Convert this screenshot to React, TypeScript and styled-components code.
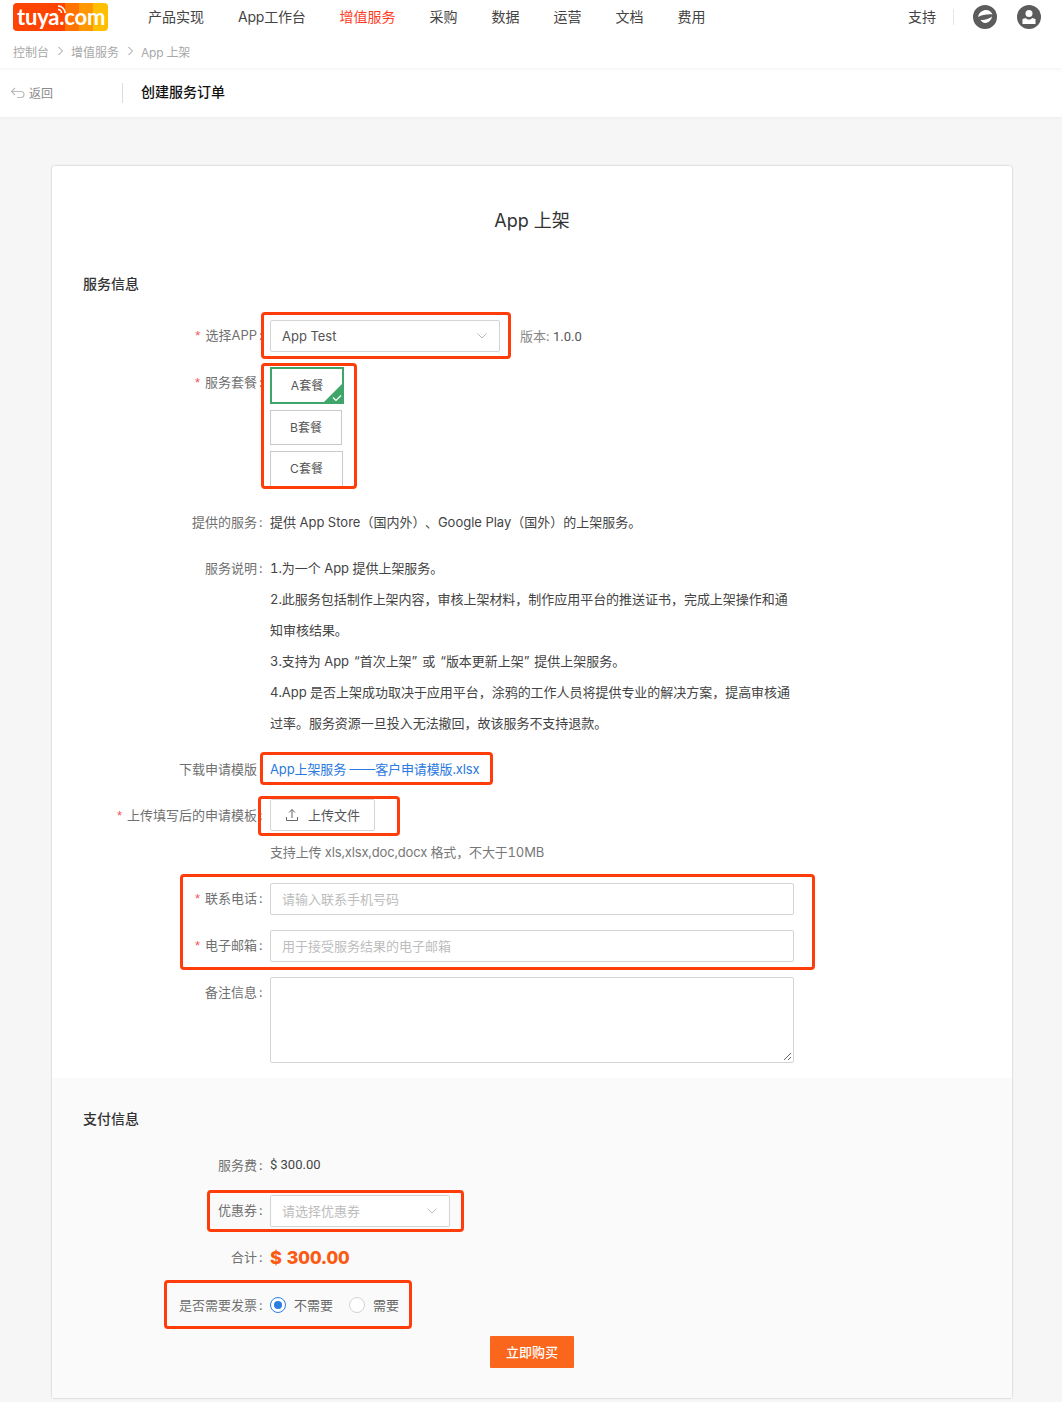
import React from "react";
import styled, { createGlobalStyle } from "styled-components";

const Global = createGlobalStyle`
  html, body { margin: 0; padding: 0; background: #f6f6f6; }
  body { font-family: Inter, "Noto Sans CJK SC", sans-serif; font-size: 13px; color: #444; font-feature-settings: "tnum"; }
  * { box-sizing: border-box; }
`;

const Page = styled.div`
  width: 1062px;
  height: 1402px;
  overflow: hidden;
  position: relative;
`;
const TopBar = styled.header`
  height: 68px;
  background: #fff;
  position: relative;
  z-index: 2;
  box-shadow: 0 1px 4px rgba(0, 0, 0, 0.06);
`;
const NavRow = styled.div`
  height: 37px;
  padding: 0 0 3px 13px;
  display: flex;
  align-items: flex-start;
`;
const Logo = styled.div`
  position: relative;
  flex: none;
  width: 95px;
  height: 28px;
  margin-top: 3px;
  border-radius: 4px;
  overflow: hidden;
  background: linear-gradient(90deg, #ff4300 0 55%, #ff7400 55% 70%, #ff9800 70% 84%, #ffbe00 84% 100%);
  color: #fff;
  font: 700 22px/28px Lato, sans-serif;
  letter-spacing: -0.2px;
  padding-left: 4px;
  white-space: nowrap;
`;
const LogoArcs = styled.svg`
  position: absolute;
  left: 44px;
  top: 1px;
`;
const NavList = styled.nav`
  display: flex;
  margin-left: 40px;
  gap: 34px;
  height: 34px;
  align-items: center;
`;
const NavItem = styled.a<{ $active?: boolean; $tight?: boolean }>`
  font-size: 14px;
  line-height: 20px;
  letter-spacing: ${(p) => (p.$tight ? "-0.2px" : "0")};
  color: ${(p) => (p.$active ? "#ff3d1f" : "#444")};
  white-space: nowrap;
`;
const NavRight = styled.div`
  margin-left: auto;
  display: flex;
  align-items: center;
  height: 34px;
  padding-right: 21px;
`;
const Divider = styled.span`
  width: 1px;
  height: 16px;
  background: #e6e6e6;
  margin: 0 19px 0 17px;
`;
const IconGap = styled.span`
  width: 20px;
`;
const Crumbs = styled.div`
  display: flex;
  align-items: center;
  padding-left: 13px;
  height: 28px;
  font-size: 12px;
  color: #a8a8a8;
  gap: 7.5px;
`;
const CrumbLast = styled.span`
  letter-spacing: -0.2px;
`;
const SubBar = styled.div`
  height: 49px;
  background: #fff;
  display: flex;
  align-items: center;
  box-shadow: 0 1px 3px rgba(0, 0, 0, 0.04);
  position: relative;
`;
const Back = styled.div`
  width: 122px;
  padding-left: 10px;
  display: flex;
  align-items: center;
  gap: 3px;
  font-size: 12px;
  color: #8a8a8a;
`;
const SubDivider = styled.span`
  width: 1px;
  height: 20px;
  background: #dcdcdc;
`;
const SubTitle = styled.div`
  margin: -3px 0 0 18px;
  font-size: 14px;
  font-weight: 500;
  color: #111;
`;
const Card = styled.main`
  position: absolute;
  left: 52px;
  top: 166px;
  width: 960px;
  height: 1232px;
  background: #fff;
  border-radius: 2px;
  box-shadow: 0 0 2px rgba(0, 0, 0, 0.3);
`;
const Title = styled.h1`
  margin: 0;
  padding-top: 42px;
  height: 108px;
  text-align: center;
  font-size: 18px;
  line-height: 26px;
  font-weight: 400;
  color: #333;
`;
const SectionTitle = styled.h2`
  margin: 0 0 0 31px;
  height: 20px;
  font-size: 14px;
  line-height: 20px;
  font-weight: 500;
  color: #333;
`;
const Row = styled.div<{ $top: number; $min?: number }>`
  display: flex;
  align-items: flex-start;
  margin-top: ${(p) => p.$top}px;
  height: ${(p) => p.$min ?? 32}px;
`;
const Label = styled.label<{ $up?: boolean }>`
  flex: none;
  width: 211px;
  height: 32px;
  margin-top: ${(p) => (p.$up ? "-1px" : "0")};
  text-align: right;
  line-height: 32px;
  font-size: 13px;
  color: #707070;
  white-space: nowrap;
`;
const Colon = styled.span`
  display: inline-block;
  width: 6px;
  text-align: left;
  padding-left: 2px;
`;
const Star = styled.span`
  color: #f5555a;
  margin-right: 5px;
  font-family: "Liberation Sans", sans-serif;
`;
const Content = styled.div`
  margin-left: 7px;
  font-size: 13px;
  line-height: 32px;
  color: #444;
  display: flex;
  align-items: flex-start;
  white-space: nowrap;
`;
const Select = styled.div<{ $w: number; $placeholder?: boolean }>`
  width: ${(p) => p.$w}px;
  height: 32px;
  padding: 0 11px;
  background: #fff;
  border: 1px solid #d4d4d4;
  border-radius: 2px;
  display: flex;
  align-items: center;
  justify-content: space-between;
  line-height: 30px;
  color: ${(p) => (p.$placeholder ? "#bdbdbd" : "#555")};
`;
const Version = styled.span`
  margin-left: 20px;
  color: #888;
  b {
    font-family: Roboto, sans-serif;
    font-weight: 400;
    color: #555;
  }
`;
const Plans = styled.div`
  display: flex;
  flex-direction: column;
`;
const Plan = styled.div<{ $w: number; $h: number; $gap: number; $on?: boolean }>`
  position: relative;
  width: ${(p) => p.$w}px;
  height: ${(p) => p.$h}px;
  margin-top: ${(p) => p.$gap}px;
  border: ${(p) => (p.$on ? "2px solid #3fa66a" : "1px solid #c9c9c9")};
  display: flex;
  align-items: center;
  justify-content: center;
  font-size: 12px;
  line-height: 16px;
  color: #555;
`;
const PlanCheck = styled.svg`
  position: absolute;
  right: -2px;
  bottom: -2px;
`;
const PunctGap = styled.span`
  padding-left: 6px;
`;
const DescList = styled.div`
  width: 524px;
  margin-top: 1px;
  letter-spacing: -0.03px;
`;
const DescLine = styled.div`
  height: 31px;
  line-height: 31px;
  color: #444;
`;
const Quoted = styled.span`
  padding: 0 1.5px;
`;
const FileLink = styled.a`
  color: #2a79e0;
  letter-spacing: -0.12px;
`;
const UploadButton = styled.div`
  width: 105px;
  height: 32px;
  border: 1px solid #d6d6d6;
  border-radius: 2px;
  display: flex;
  align-items: center;
  justify-content: center;
  gap: 9px;
  color: #555;
  line-height: 30px;
`;
const Hint = styled.div`
  margin: 5px 0 0 218px;
  height: 32px;
  line-height: 32px;
  color: #777;
  letter-spacing: -0.15px;
`;
const Input = styled.div`
  width: 524px;
  height: 32px;
  padding: 0 11px;
  border: 1px solid #d4d4d4;
  border-radius: 2px;
  line-height: 30px;
  color: #bdbdbd;
`;
const TextArea = styled.div`
  position: relative;
  width: 524px;
  height: 86px;
  border: 1px solid #d4d4d4;
  border-radius: 2px;
`;
const Grip = styled.svg`
  position: absolute;
  right: 1px;
  bottom: 1px;
`;
const Pay = styled.section`
  position: absolute;
  left: 0;
  right: 0;
  top: 912px;
  bottom: 0;
  padding-top: 31px;
  background: #fafafa;
`;
const Fee = styled.span`
  font-family: Roboto, sans-serif;
  font-size: 13px;
`;
const Total = styled.span`
  font-size: 18px;
  font-weight: 800;
  color: #fb5a14;
`;
const Radios = styled.div`
  display: flex;
  align-items: center;
  height: 32px;
`;
const Radio = styled.span<{ $on?: boolean }>`
  width: 16px;
  height: 16px;
  border-radius: 50%;
  background: #fff;
  border: 1px solid ${(p) => (p.$on ? "#2a7de1" : "#d4d4d4")};
  display: flex;
  align-items: center;
  justify-content: center;
  margin-right: 8px;
  &::after {
    content: "";
    width: 8px;
    height: 8px;
    border-radius: 50%;
    background: ${(p) => (p.$on ? "#2a7de1" : "transparent")};
  }
`;
const RadioText = styled.span`
  color: #666;
  margin-right: 16px;
`;
const BuyButton = styled.button`
  display: block;
  width: 84px;
  height: 32px;
  margin: 15px 0 0 438px;
  padding: 0;
  border: none;
  border-radius: 1px;
  background: #f9661c;
  color: #fff;
  font: 500 13px/32px Inter, "Noto Sans CJK SC", sans-serif;
`;
const Mark = styled.div<{ $x: number; $y: number; $w: number; $h: number }>`
  position: absolute;
  left: ${(p) => p.$x}px;
  top: ${(p) => p.$y}px;
  width: ${(p) => p.$w}px;
  height: ${(p) => p.$h}px;
  border: 3px solid #ff3d0a;
  border-radius: 4px;
  pointer-events: none;
  z-index: 3;
`;

const Chevron = () => (
  <svg width="12" height="12" viewBox="0 0 12 12" fill="none" stroke="#bbb" strokeWidth="1">
    <path d="M1.5 3.5 6 8l4.5-4.5" />
  </svg>
);
const Sep = () => (
  <svg width="7" height="10" viewBox="0 0 7 10" fill="none" stroke="#999" strokeWidth="1">
    <path d="M1.5 1 5.5 5l-4 4" />
  </svg>
);

const marks: [number, number, number, number][] = [
  [261, 312, 250, 47],
  [261, 363, 96, 126],
  [260, 752, 233, 33],
  [258, 796, 142, 40],
  [180, 874, 635, 96],
  [207, 1190, 257, 42],
  [164, 1280, 248, 49],
];

export default function App() {
  return (
    <Page>
      <Global />
      <TopBar>
        <NavRow>
          <Logo>
            tuya.com
            <LogoArcs width="12" height="12" viewBox="0 0 12 12" fill="none" stroke="#fff" strokeWidth="1.6">
              <path d="M1 2a7 7 0 0 1 7 7" />
              <path d="M1 5.500a3.500 3.500 0 0 1 3.500 3.500" />
            </LogoArcs>
          </Logo>
          <NavList>
            <NavItem>产品实现</NavItem>
            <NavItem $tight>App工作台</NavItem>
            <NavItem $active>增值服务</NavItem>
            <NavItem>采购</NavItem>
            <NavItem>数据</NavItem>
            <NavItem>运营</NavItem>
            <NavItem>文档</NavItem>
            <NavItem>费用</NavItem>
          </NavList>
          <NavRight>
            <NavItem>支持</NavItem>
            <Divider />
            <svg width="24" height="24" viewBox="0 0 24 24">
              <circle cx="12" cy="12" r="12" fill="#5c5c5c" />
              <path d="M5 12C6 7 10 5 13 5c3 0 5.500 2 6.500 4.500C14 9 9 10 5 12z" fill="#fff" />
              <path d="M7.500 15c3.500.5 8.500-1 11.500-3.500-.5 4-4 6.500-7 6.500-2 0-3.500-1.500-4.500-3z" fill="#fff" />
            </svg>
            <IconGap />
            <svg width="24" height="24" viewBox="0 0 24 24">
              <circle cx="12" cy="12" r="12" fill="#5c5c5c" />
              <circle cx="12" cy="8.500" r="3.500" fill="#fff" />
              <path d="M5.500 14 9 13c1 2 5 2 6 0l3.500 1v5h-13z" fill="#fff" />
            </svg>
          </NavRight>
        </NavRow>
        <Crumbs>
          <span>控制台</span>
          <Sep />
          <span>增值服务</span>
          <Sep />
          <CrumbLast>App 上架</CrumbLast>
        </Crumbs>
      </TopBar>
      <SubBar>
        <Back>
          <svg width="16" height="14" viewBox="0 0 16 14" fill="none" stroke="#bbb" strokeWidth="1.100">
            <path d="M5 2 1.500 5.500 5 9" />
            <path d="M1.500 5.500H11c2 0 3 1.500 3 3s-1 3-3 3H7" />
          </svg>
          返回
        </Back>
        <SubDivider />
        <SubTitle>创建服务订单</SubTitle>
      </SubBar>
      <Card>
        <Title>App 上架</Title>
        <SectionTitle>服务信息</SectionTitle>
        <Row $top={26}>
          <Label $up><Star>*</Star>选择APP<Colon>:</Colon></Label>
          <Content>
            <Select $w={230}>App Test<Chevron /></Select>
            <Version>版本: <b>1.0.0</b></Version>
          </Content>
        </Row>
        <Row $top={15} $min={120}>
          <Label $up><Star>*</Star>服务套餐<Colon>:</Colon></Label>
          <Content>
            <Plans>
              <Plan $w={74} $h={37} $gap={0} $on>
                A套餐
                <PlanCheck width="22" height="22" viewBox="0 0 22 22">
                  <path d="M22 0v22H0z" fill="#3fa66a" />
                  <path d="M11 15.500l3 3 5-5" fill="none" stroke="#fff" strokeWidth="1.200" />
                </PlanCheck>
              </Plan>
              <Plan $w={72} $h={35} $gap={6}>B套餐</Plan>
              <Plan $w={73} $h={36} $gap={6}>C套餐</Plan>
            </Plans>
          </Content>
        </Row>
        <Row $top={19}>
          <Label>提供的服务<Colon>:</Colon></Label>
          <Content>
            <span>提供 App Store（国内外）<PunctGap>、</PunctGap>Google Play（国外）的上架服务。</span>
          </Content>
        </Row>
        <Row $top={14} $min={186}>
          <Label>服务说明<Colon>:</Colon></Label>
          <Content>
            <DescList>
              <DescLine>1.为一个 App 提供上架服务。</DescLine>
              <DescLine>2.此服务包括制作上架内容，审核上架材料，制作应用平台的推送证书，完成上架操作和通</DescLine>
              <DescLine>知审核结果。</DescLine>
              <DescLine>3.支持为 App <Quoted>“首次上架”</Quoted> 或 <Quoted>“版本更新上架”</Quoted> 提供上架服务。</DescLine>
              <DescLine>4.App 是否上架成功取决于应用平台，涂鸦的工作人员将提供专业的解决方案，提高审核通</DescLine>
              <DescLine>过率。服务资源一旦投入无法撤回，故该服务不支持退款。</DescLine>
            </DescList>
          </Content>
        </Row>
        <Row $top={15}>
          <Label>下载申请模版<Colon>:</Colon></Label>
          <Content><FileLink>App上架服务 ——客户申请模版.xlsx</FileLink></Content>
        </Row>
        <Row $top={14}>
          <Label><Star>*</Star>上传填写后的申请模板<Colon>:</Colon></Label>
          <Content>
            <UploadButton>
              <svg width="14" height="14" viewBox="0 0 14 14" fill="none" stroke="#666" strokeWidth="1">
                <path d="M7 10V1.500M4 4.500l3-3 3 3M1.500 9v3.500h11V9" />
              </svg>
              上传文件
            </UploadButton>
          </Content>
        </Row>
        <Hint>支持上传 xls,xlsx,doc,docx 格式，不大于10MB</Hint>
        <Row $top={15}>
          <Label $up><Star>*</Star>联系电话<Colon>:</Colon></Label>
          <Content><Input>请输入联系手机号码</Input></Content>
        </Row>
        <Row $top={15}>
          <Label $up><Star>*</Star>电子邮箱<Colon>:</Colon></Label>
          <Content><Input>用于接受服务结果的电子邮箱</Input></Content>
        </Row>
        <Row $top={15} $min={86}>
          <Label $up>备注信息<Colon>:</Colon></Label>
          <Content>
            <TextArea>
              <Grip width="9" height="9" viewBox="0 0 9 9" stroke="#666" strokeWidth="1">
                <path d="M1 8 8 1M5 8l3-3" />
              </Grip>
            </TextArea>
          </Content>
        </Row>
        <Pay>
          <SectionTitle>支付信息</SectionTitle>
          <Row $top={20}>
            <Label>服务费<Colon>:</Colon></Label>
            <Content><Fee>$ 300.00</Fee></Content>
          </Row>
          <Row $top={14}>
            <Label $up>优惠券<Colon>:</Colon></Label>
            <Content><Select $w={180} $placeholder>请选择优惠券<Chevron /></Select></Content>
          </Row>
          <Row $top={15}>
            <Label $up>合计<Colon>:</Colon></Label>
            <Content><Total>$ 300.00</Total></Content>
          </Row>
          <Row $top={15}>
            <Label>是否需要发票<Colon>:</Colon></Label>
            <Content>
              <Radios>
                <Radio $on />
                <RadioText>不需要</RadioText>
                <Radio />
                <RadioText>需要</RadioText>
              </Radios>
            </Content>
          </Row>
          <BuyButton>立即购买</BuyButton>
        </Pay>
      </Card>
      {marks.map(([x, y, w, h]) => (
        <Mark key={`${x}-${y}`} $x={x} $y={y} $w={w} $h={h} />
      ))}
    </Page>
  );
}
